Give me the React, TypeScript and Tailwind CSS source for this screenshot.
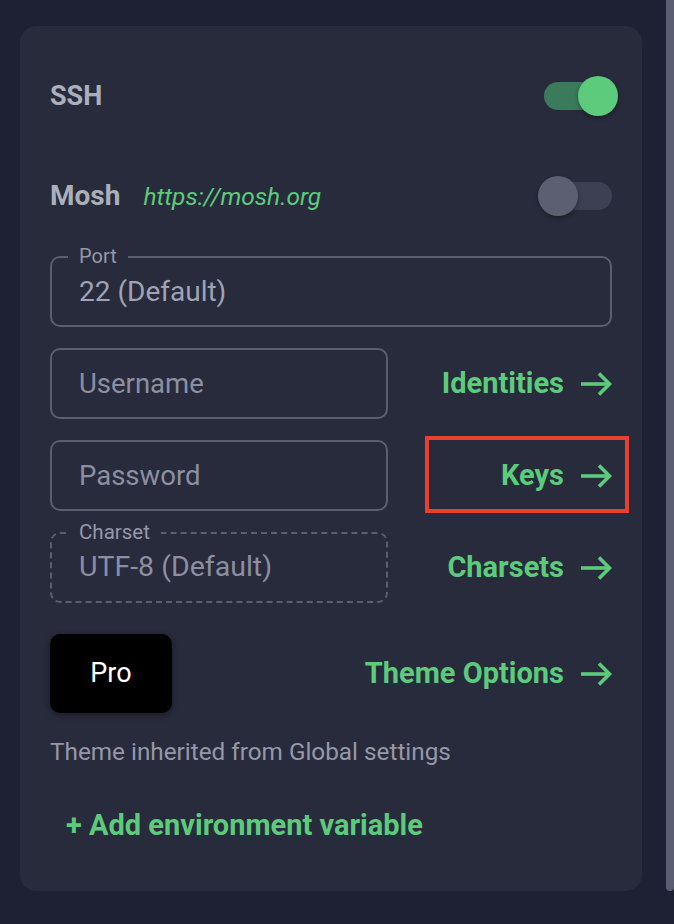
import React from "react";

const GREEN = "#5ccb7b";

const Arrow = () => (
  <svg width="32" height="24" viewBox="0 0 32 24" fill="none" stroke={GREEN} strokeWidth="3.6" strokeLinecap="butt" strokeLinejoin="miter">
    <path d="M1 12H30" />
    <path d="M19 1.5L29.5 12L19 22.5" />
  </svg>
);

const LinkAction = ({ label }: { label: string }) => (
  <div className="flex items-center justify-end gap-[16px] text-[29px] font-bold text-[#5ccb7b] leading-none">
    <span>{label}</span>
    <Arrow />
  </div>
);

const Toggle = ({ on }: { on: boolean }) => (
  <div className="relative w-[80px] h-[40px] -mr-[6px]">
    <div className={`absolute left-[6px] top-[6px] w-[68px] h-[28px] rounded-full ${on ? "bg-[#3b7a5b]" : "bg-[#3d4052]"}`} />
    <div
      className={`absolute top-0 w-[40px] h-[40px] rounded-full shadow-[0_2px_4px_rgba(0,0,0,0.35)] ${on ? "left-[40px] bg-[#5ccb7b]" : "left-0 bg-[#5c5f72]"}`}
    />
  </div>
);

export default function App() {
  return (
    <div className="w-[674px] h-[924px] bg-[#1e2033] flex font-['Roboto',sans-serif] overflow-hidden">
      <div className="pl-[20px] pt-[26px]">
        <div className="w-[622px] h-[865px] rounded-[16px] bg-[#282b3c] px-[30px] pt-[50px] flex flex-col">
          {/* SSH */}
          <div className="flex items-center justify-between h-[40px]">
            <span className="text-[27px] font-bold text-[#a9b0ba] leading-none">SSH</span>
            <Toggle on />
          </div>
          {/* Mosh */}
          <div className="flex items-center justify-between h-[40px] mt-[60px]">
            <div className="flex items-baseline gap-[23px]">
              <span className="text-[28px] font-bold text-[#a9b0ba] leading-none">Mosh</span>
              <span className="text-[24.5px] italic text-[#5ccb7b] leading-none">https://mosh.org</span>
            </div>
            <Toggle on={false} />
          </div>
          {/* Port */}
          <div className="relative mt-[40px] h-[71px] rounded-[10px] border-2 border-[#5b5e6f] flex items-center pl-[27px]">
            <span className="absolute left-[16px] -top-[12px] px-[11px] bg-[#282b3c] text-[20px] leading-[20px] text-[#9598aa]">Port</span>
            <span className="text-[28px] text-[#9fa3b4] leading-none">22 (Default)</span>
          </div>
          {/* Username */}
          <div className="flex items-center mt-[21px]">
            <div className="w-[338px] h-[71px] rounded-[10px] border-2 border-[#5b5e6f] flex items-center pl-[27px]">
              <span className="text-[27.5px] text-[#8c8fa2] leading-none">Username</span>
            </div>
            <div className="flex-1">
              <LinkAction label="Identities" />
            </div>
          </div>
          {/* Password */}
          <div className="flex items-center mt-[21px]">
            <div className="w-[338px] h-[71px] rounded-[10px] border-2 border-[#5b5e6f] flex items-center pl-[27px]">
              <span className="text-[27.5px] text-[#8c8fa2] leading-none">Password</span>
            </div>
            <div className="flex-1 relative self-stretch flex items-center justify-end">
              <LinkAction label="Keys" />
              <div className="absolute left-[37px] -right-[17px] -top-[4px] -bottom-[2px] border-[4px] border-[#e8402c]" />
            </div>
          </div>
          {/* Charset */}
          <div className="flex items-center mt-[21px]">
            <div className="relative w-[338px] h-[71px] rounded-[10px] border-2 border-dashed border-[#5b5e6f] flex items-center pl-[27px]">
              <span className="absolute left-[16px] -top-[12px] px-[11px] bg-[#282b3c] text-[20.5px] leading-[20px] text-[#9598aa]">Charset</span>
              <span className="text-[28.5px] text-[#8c8fa2] leading-none">UTF-8 (Default)</span>
            </div>
            <div className="flex-1">
              <LinkAction label="Charsets" />
            </div>
          </div>
          {/* Theme */}
          <div className="flex items-center mt-[31px]">
            <div className="w-[122px] h-[79px] rounded-[10px] bg-black shadow-[0_2px_6px_rgba(0,0,0,0.4)] flex items-center justify-center">
              <span className="text-[27px] text-white leading-none">Pro</span>
            </div>
            <div className="flex-1">
              <LinkAction label="Theme Options" />
            </div>
          </div>
          <div className="mt-[24px] text-[24.3px] leading-[30px] text-[#9598a8]">Theme inherited from Global settings</div>
          <div className="mt-[41px] pl-[16px] text-[29px] leading-[34px] font-bold text-[#5ccb7b]">+ Add environment variable</div>
        </div>
      </div>
      <div className="ml-[24px] w-[8px] h-[891px] rounded-b-[4px] bg-[#5b5e72]" />
    </div>
  );
}
